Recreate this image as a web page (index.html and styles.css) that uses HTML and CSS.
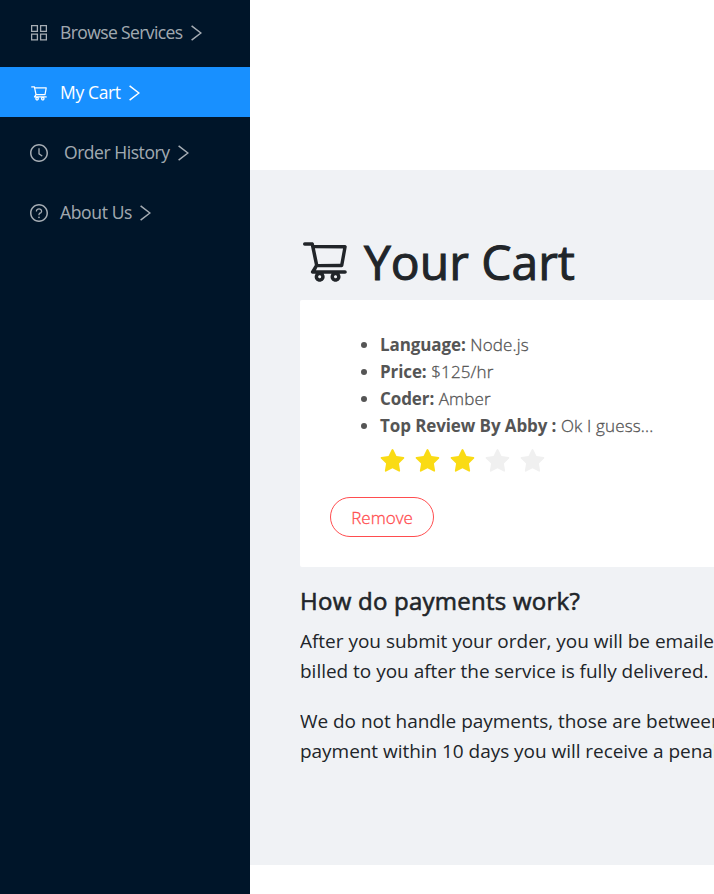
FILE: index.html
```html
<!DOCTYPE html>
<html lang="en">
<head>
<meta charset="utf-8">
<title>Your Cart</title>
<link rel="stylesheet" href="styles.css">
</head>
<body>
<svg class="defs" aria-hidden="true">
  <symbol id="appstore" viewBox="0 0 16 16"><path d="M.6 .6h5.800v5.800H.6zM9.600 .6h5.800v5.800H9.600zM.6 9.100h5.800v5.800H.6zM9.600 9.100h5.800v5.800H9.600z" fill="none" stroke="currentColor" stroke-width="1.300"/></symbol>
  <symbol id="cart" viewBox="0 0 1024 1024"><path d="M922.9 701.9H327.4l29.9-60.9 496.8-.9c16.800 0 31.200-12 34.200-28.600l68.800-385.100c1.800-10.100-.9-20.500-7.500-28.400a34.990 34.990 0 0 0-26.600-12.500l-632-2.100-5.400-25.400c-3.400-16.200-18-28-34.600-28H96.500a35.300 35.300 0 1 0 0 70.600h125.900L246 312.800l58.100 281.300-74.800 122.100a34.960 34.960 0 0 0-3 36.800c6 11.900 18.100 19.400 31.500 19.400h62.800a102.430 102.430 0 0 0-20.600 61.700c0 56.600 46 102.600 102.600 102.600s102.600-46 102.600-102.600c0-22.300-7.400-44-20.600-61.700h161.100a102.430 102.430 0 0 0-20.600 61.700c0 56.600 46 102.600 102.600 102.600s102.600-46 102.600-102.600c0-22.300-7.400-44-20.600-61.700H923c19.400 0 35.300-15.800 35.300-35.300a35.420 35.420 0 0 0-35.400-35.200zM305.700 253l575.800 1.900-56.400 315.800-452.300.8L305.700 253zm96.900 612.700c-17.400 0-31.600-14.200-31.600-31.600 0-17.400 14.200-31.600 31.600-31.600s31.600 14.200 31.600 31.600a31.600 31.600 0 0 1-31.600 31.600zm325.100 0c-17.400 0-31.600-14.200-31.600-31.600 0-17.400 14.200-31.600 31.600-31.600s31.600 14.200 31.600 31.600a31.600 31.600 0 0 1-31.600 31.600z"/></symbol>
  <symbol id="clock" viewBox="64 64 896 896"><path d="M512 64C264.600 64 64 264.600 64 512s200.600 448 448 448 448-200.600 448-448S759.400 64 512 64zm0 820c-205.400 0-372-166.600-372-372s166.600-372 372-372 372 166.600 372 372-166.600 372-372 372z"/><path d="M686.700 638.600L544.100 535.500V288c0-4.400-3.600-8-8-8H488c-4.400 0-8 3.600-8 8v275.400c0 2.600 1.200 5 3.300 6.500l165.400 120.600c3.600 2.600 8.600 1.800 11.200-1.700l28.600-39c2.600-3.700 1.800-8.700-1.800-11.200z"/></symbol>
  <symbol id="question" viewBox="64 64 896 896"><path d="M512 64C264.600 64 64 264.600 64 512s200.600 448 448 448 448-200.600 448-448S759.400 64 512 64zm0 820c-205.400 0-372-166.600-372-372s166.600-372 372-372 372 166.600 372 372-166.600 372-372 372z"/><path d="M623.600 316.700C593.600 290.400 554 276 512 276s-81.600 14.500-111.600 40.700C369.200 344 352 380.700 352 420v7.600c0 4.400 3.600 8 8 8h48c4.400 0 8-3.600 8-8V420c0-44.100 43.100-80 96-80s96 35.900 96 80c0 31.100-22 59.600-56.100 72.700-21.200 8.100-39.200 22.300-52.100 40.900-13.100 19-19.900 41.800-19.900 64.900V620c0 4.400 3.600 8 8 8h48c4.400 0 8-3.600 8-8v-22.700a48.300 48.300 0 0 1 30.900-44.800c59-22.700 97.100-74.700 97.100-132.500.1-39.300-17.100-76-48.300-103.300zM472 732a40 40 0 1 0 80 0 40 40 0 1 0-80 0z"/></symbol>
  <symbol id="right" viewBox="0 0 11 16"><path d="M.6 .9L9.900 8 .6 15.100" fill="none" stroke="currentColor" stroke-width="1.500"/></symbol>
  <symbol id="star" viewBox="64 64 896 896"><path d="M908.100 353.100l-253.900-36.900L540.700 86.100c-3.100-6.300-8.200-11.400-14.500-14.500-15.800-7.800-35-1.300-42.900 14.500L369.800 316.200l-253.900 36.900c-7 1-13.400 4.300-18.300 9.300a32.050 32.050 0 0 0 .6 45.300l183.700 179.100-43.400 252.900a31.950 31.950 0 0 0 46.400 33.700L512 754l227.100 119.400c6.200 3.300 13.400 4.400 20.300 3.200 17.400-3 29.100-19.500 26.100-36.900l-43.400-252.900 183.700-179.100c5-4.900 8.300-11.300 9.300-18.300 2.700-17.500-9.500-33.700-27-36.300z"/></symbol>
</svg>
<div class="layout">
  <nav class="sidebar">
    <a class="item"><svg class="icon grid"><use href="#appstore"/></svg><span class="label browse">Browse Services</span><svg class="arrow"><use href="#right"/></svg></a>
    <a class="item active"><svg class="icon"><use href="#cart"/></svg><span class="label mycart">My Cart</span><svg class="arrow"><use href="#right"/></svg></a>
    <a class="item"><svg class="icon"><use href="#clock"/></svg><span class="label history">Order History</span><svg class="arrow"><use href="#right"/></svg></a>
    <a class="item"><svg class="icon"><use href="#question"/></svg><span class="label about">About Us</span><svg class="arrow"><use href="#right"/></svg></a>
  </nav>
  <main class="content">
    <h1 class="title"><svg class="title-icon"><use href="#cart"/></svg><span class="title-text">Your Cart</span></h1>
    <section class="card">
      <ul class="details">
        <li><b>Language:</b> Node.js</li>
        <li><b>Price:</b> $125/hr</li>
        <li><b>Coder:</b> Amber</li>
        <li><b>Top Review By Abby :</b> Ok I guess...</li>
      </ul>
      <div class="stars">
        <svg class="star"><use href="#star"/></svg>
        <svg class="star"><use href="#star"/></svg>
        <svg class="star"><use href="#star"/></svg>
        <svg class="star off"><use href="#star"/></svg>
        <svg class="star off"><use href="#star"/></svg>
      </div>
      <button class="remove" type="button">Remove</button>
    </section>
    <h2 class="subtitle">How do payments work?</h2>
    <p class="text">After you submit your order, you will be emailed<br>billed to you after the service is fully delivered.</p>
    <p class="text second">We do not handle payments, those are between<br>payment within 10 days you will receive a penalty</p>
  </main>
</div>
</body>
</html>
```
FILE: styles.css
```css
* { box-sizing: border-box; }
body {
  margin: 0;
  height: 894px;
  overflow: hidden;
  background: #fff;
  font-family: "Open Sans", "Noto Sans", sans-serif;
  color: #212529;
}
svg { display: block; flex: none; fill: currentColor; }
.defs { width: 0; height: 0; position: absolute; }
.layout { display: flex; height: 894px; }
.sidebar {
  flex: none;
  width: 250px;
  padding-top: 7px;
  background: #001529;
}
.item {
  display: flex;
  align-items: center;
  height: 50px;
  margin-bottom: 10px;
  padding: 1px 0 0 30px;
  font-size: 17.500px;
  color: rgba(255, 255, 255, .65);
}
.item.active { background: #1890ff; color: #fff; }
.icon { width: 18px; height: 18px; margin-right: 12px; }
.icon.grid { width: 16px; height: 16px; margin: 0 13px 0 1px; }
.arrow { width: 11px; height: 16px; margin-left: 8px; }
.label { padding-bottom: 2px; white-space: nowrap; }
.browse { letter-spacing: -.600px; }
.mycart, .about { letter-spacing: -.350px; }
.history { margin-left: 4px; letter-spacing: -.450px; }
.content {
  flex: 1;
  min-width: 0;
  height: 695px;
  margin-top: 170px;
  padding: 53px 0 0 50px;
  background: #f0f2f5;
}
.title {
  display: flex;
  align-items: center;
  height: 75px;
  margin: 0 0 2px;
  font-size: 48px;
  font-weight: 400;
  white-space: nowrap;
  -webkit-text-stroke: 1px #212529;
}
.title-icon { width: 50px; height: 50px; margin: 0 14px 0 0; }
.title-text { padding-top: 2px; }
.card {
  height: 267px;
  padding: 31px 30px 0;
  border-radius: 2px 0 0 2px;
  background: #fff;
  color: #555;
}
.details {
  margin: 0;
  padding-left: 50px;
  font-size: 17px;
  font-weight: 300;
  line-height: 27px;
  letter-spacing: .150px;
  -webkit-text-stroke: .3px #555;
}
.details b { font-weight: 700; letter-spacing: -.100px; -webkit-text-stroke: 0; }
.stars { display: flex; gap: 10px; height: 25px; margin: 10px 0 0 50px; }
.star { width: 25px; height: 25px; color: #fadb14; }
.star.off { color: #f0f0f0; }
.remove {
  display: block;
  width: 104px;
  height: 40px;
  margin-top: 23px;
  padding: 0;
  border: 1px solid #ff4d4f;
  border-radius: 20px;
  background: #fff;
  color: #ff4d4f;
  font: 300 17px "Open Sans", "Noto Sans", sans-serif;
  -webkit-text-stroke: .3px #ff4d4f;
}
.subtitle {
  margin: 18px 0 9px;
  font-size: 24px;
  font-weight: 400;
  line-height: 32px;
  letter-spacing: .250px;
  -webkit-text-stroke: .6px #212529;
}
.text {
  margin: 0 0 20px;
  overflow: hidden;
  font-size: 19px;
  line-height: 30px;
  letter-spacing: -.020px;
  white-space: nowrap;
}
.text.second { letter-spacing: -.040px; }
```
